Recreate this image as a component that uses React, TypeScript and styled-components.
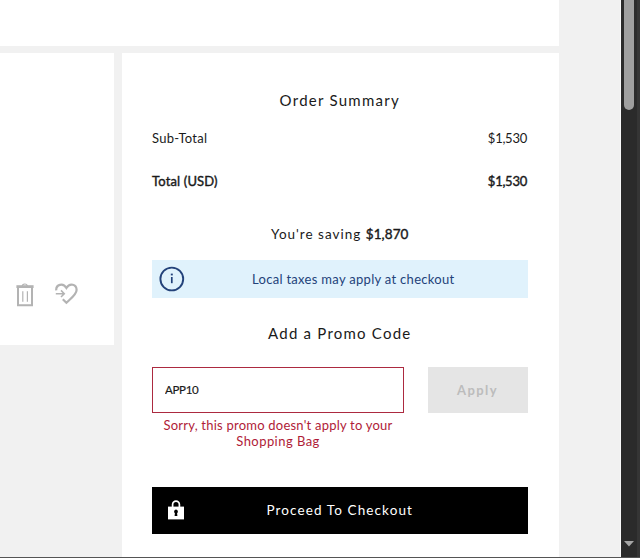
import { useState } from "react"
import styled, { createGlobalStyle } from "styled-components"

const App = () => {
    const [code, setCode] = useState("APP10")

    return (
        <Screen>
            <GlobalStyle />
            <Page>
                <TopPanel />
                <Columns>
                    <ItemCard>
                        <TrashIcon />
                        <WishIcon />
                    </ItemCard>
                    <Summary>
                        <Title>Order Summary</Title>
                        <Row>
                            <Label $space={0.25}>Sub-Total</Label>
                            <Label $space={-0.25}>$1,530</Label>
                        </Row>
                        <TotalRow>
                            <Label $space={0.15}>Total (USD)</Label>
                            <Label $space={-0.25}>$1,530</Label>
                        </TotalRow>
                        <Saving>
                            You're saving <Amount>$1,870</Amount>
                        </Saving>
                        <Notice>
                            <InfoIcon />
                            <NoticeText>Local taxes may apply at checkout</NoticeText>
                        </Notice>
                        <PromoTitle>Add a Promo Code</PromoTitle>
                        <PromoRow>
                            <Field>
                                <Input value={code} onChange={(e) => setCode(e.target.value)} />
                                <ErrorText>
                                    Sorry, this promo doesn't apply to your
                                    <br />
                                    <ErrorEnd>Shopping Bag</ErrorEnd>
                                </ErrorText>
                            </Field>
                            <Apply disabled>Apply</Apply>
                        </PromoRow>
                        <Checkout>
                            <LockIcon />
                            <CheckoutText>Proceed To Checkout</CheckoutText>
                        </Checkout>
                    </Summary>
                </Columns>
            </Page>
            <Scrollbar>
                <Thumb />
                <Arrow viewBox="0 0 10 6">
                    <path d="M0 0h10L5 5.6z" fill="#a6a6a6" />
                </Arrow>
            </Scrollbar>
        </Screen>
    )
}

const TrashIcon = () => (
    <svg width="18" height="24" viewBox="0 0 18 24" fill="none" stroke="#b3b3b3">
        <path d="M6.3 3C6.3 .3 11.2 .3 11.2 3" strokeWidth="1.2" />
        <path d="M.4 3.6h17.2" strokeWidth="2.8" />
        <path d="M2 4v18.2h14V4" strokeWidth="2" />
        <path d="M6.8 8.2v10.6M11.4 8.2v10.6" strokeWidth="1.2" />
    </svg>
)

const WishIcon = () => (
    <svg width="23" height="22" viewBox="0 0 23 22" fill="none" stroke="#b3b3b3">
        <path
            d="M1.2 7.4C.9 1.6 8-.6 11.4 5 14.8-.6 21.6 1.4 21.6 7c0 4.4-5.6 8.4-10.2 12.8L7.8 16.2"
            strokeWidth="2.2"
        />
        <path d="M.8 10.7h8.2M6 7.4l3.3 3.3L6 14" strokeWidth="1.5" />
    </svg>
)

const InfoIcon = () => (
    <svg width="26" height="26" viewBox="0 0 26 26" fill="none" stroke="#23427a">
        <circle cx="12.8" cy="13" r="11.4" strokeWidth="1.9" />
        <path d="M12.8 11v6.2" strokeWidth="1.7" />
        <path d="M12.8 7.6v1.8" strokeWidth="2" />
    </svg>
)

const LockIcon = () => (
    <svg width="16" height="20" viewBox="0 0 16 20">
        <path d="M4.6 7V4.6a3.4 3.4 0 0 1 6.8 0V7" fill="none" stroke="#fff" strokeWidth="1.7" />
        <path d="M0 6.6h16v12.8H0z" fill="#fff" />
        <path d="M8 9.6a2 2 0 0 1 1.1 3.6l.3 2.9H6.6l.3-2.9A2 2 0 0 1 8 9.6z" fill="#000" />
    </svg>
)

export default App

const GlobalStyle = createGlobalStyle`
* {
box-sizing: border-box;
}
body {
margin: 0;
font-family: Lato, "Liberation Sans", sans-serif;
color: #1a1a1a;
}
svg {
display: block;
flex-shrink: 0;
}
`
const Screen = styled.div`
width: 640px;
height: 558px;
display: flex;
overflow: hidden;
border-bottom: 1px solid #555;
`
const Page = styled.div`
flex: 1;
background-color: #f1f1f1;
border-right: 1px solid #fafafa;
`
const TopPanel = styled.div`
width: 558.5px;
height: 46px;
background-color: white;
`
const Columns = styled.div`
display: flex;
align-items: flex-start;
gap: 7.5px;
margin-top: 7px;
`
const ItemCard = styled.div`
width: 114px;
height: 292px;
display: flex;
align-items: flex-start;
gap: 21px;
padding: 230px 0 0 16px;
background-color: white;
`
const Summary = styled.div`
width: 437px;
height: 504px;
padding: 37px 31px 0 30.5px;
background-color: white;
`
const Title = styled.div`
height: 20px;
line-height: 20px;
font-size: 15px;
letter-spacing: 1.25px;
text-align: center;
white-space: nowrap;
`
const PromoTitle = styled(Title)`
margin-top: 25px;
letter-spacing: 1.22px;
`
const Row = styled.div`
display: flex;
justify-content: space-between;
height: 20px;
margin-top: 18px;
padding-right: 0.5px;
line-height: 20px;
font-size: 13px;
`
const TotalRow = styled(Row)`
margin-top: 23px;
-webkit-text-stroke: 0.4px #1a1a1a;
`
const Label = styled.span<{ $space: number }>`
letter-spacing: ${(p) => p.$space}px;
`
const Saving = styled.div`
height: 20px;
margin-top: 33px;
line-height: 20px;
font-size: 13.5px;
letter-spacing: 1px;
text-align: center;
`
const Amount = styled.span`
letter-spacing: 0.1px;
-webkit-text-stroke: 0.4px #1a1a1a;
`
const Notice = styled.div`
display: flex;
align-items: center;
height: 38px;
margin-top: 16px;
padding: 0 7px;
background-color: #e0f2fc;
color: #23427a;
`
const NoticeText = styled.div`
flex: 1;
padding-left: 1px;
font-size: 13px;
letter-spacing: 0.3px;
text-align: center;
white-space: nowrap;
`
const PromoRow = styled.div`
display: flex;
justify-content: space-between;
align-items: flex-start;
height: 120px;
margin-top: 24px;
`
const Field = styled.div`
width: 252px;
`
const Input = styled.input`
display: block;
width: 100%;
height: 46px;
padding: 0 12px 2px;
border: 1px solid #ac2a40;
border-radius: 0;
outline: none;
font-family: inherit;
font-size: 11.5px;
letter-spacing: -0.3px;
color: #1a1a1a;
-webkit-text-stroke: 0.2px #1a1a1a;
`
const ErrorText = styled.div`
margin-top: 4px;
line-height: 16px;
font-size: 13px;
letter-spacing: 0.22px;
text-align: center;
white-space: nowrap;
color: #b01c38;
`
const ErrorEnd = styled.span`
letter-spacing: 0.45px;
`
const Apply = styled.button`
width: 100px;
height: 46px;
border: none;
background-color: #e5e5e5;
font-family: inherit;
font-size: 13px;
font-weight: 700;
letter-spacing: 1.4px;
color: #bcbcbc;
`
const Checkout = styled.div`
display: flex;
align-items: center;
height: 47px;
padding: 0 16px 1px;
background-color: black;
color: white;
`
const CheckoutText = styled.div`
flex: 1;
padding: 0 16px 1px 0;
font-size: 13.5px;
letter-spacing: 1.1px;
text-align: center;
white-space: nowrap;
`
const Scrollbar = styled.div`
display: flex;
flex-direction: column;
justify-content: space-between;
width: 19px;
padding: 0 3px;
background-color: #2b2b2b;
border-right: 3px solid #353535;
`
const Thumb = styled.div`
width: 10px;
height: 110px;
border-radius: 0 0 5px 5px;
background-color: #9f9f9f;
`
const Arrow = styled.svg`
width: 10px;
height: 6px;
margin-bottom: 10px;
`
